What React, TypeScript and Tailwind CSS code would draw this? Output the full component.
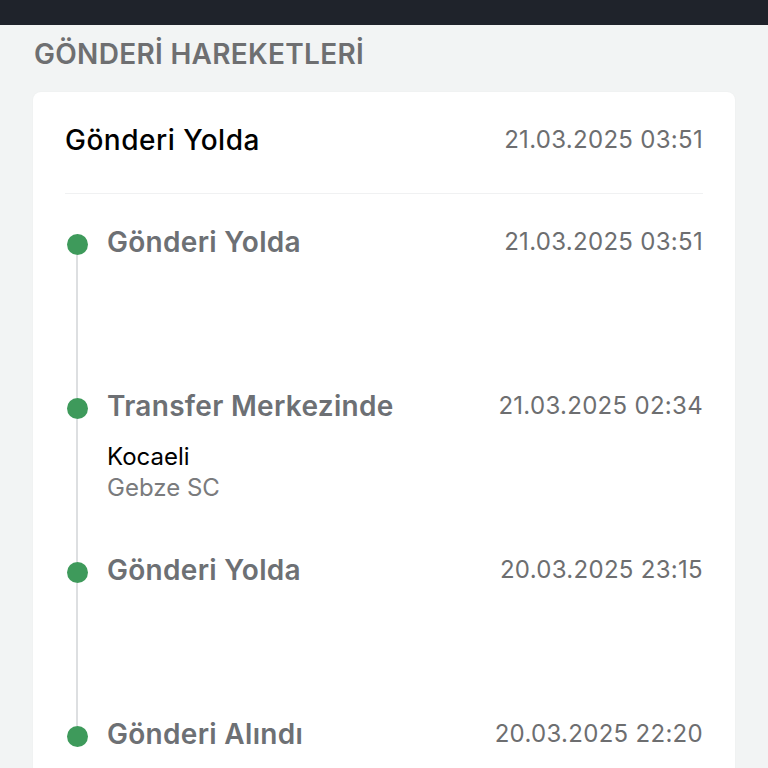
import React from 'react';

const events = [
  { id: 1, title: 'Gönderi Yolda', date: '21.03.2025 03:51' },
  { id: 2, title: 'Transfer Merkezinde', date: '21.03.2025 02:34', city: 'Kocaeli', branch: 'Gebze SC' },
  { id: 3, title: 'Gönderi Yolda', date: '20.03.2025 23:15' },
  { id: 4, title: 'Gönderi Alındı', date: '20.03.2025 22:20' },
];

const App = () => {
  return (
    <div className="min-h-screen w-full bg-[#f2f4f4] font-['Inter','Noto_Sans',sans-serif]">
      <div className="h-[25px] bg-[#1f232b]" />

      <div className="px-[33px]">
        <h2 className="pl-px pt-[13px] text-[28px] leading-[32px] font-semibold tracking-[0.3px] text-[#6e6f71]">
          GÖNDERİ HAREKETLERİ
        </h2>

        <div className="mt-[22px] rounded-lg bg-white px-8 shadow-[0_0_2px_rgba(0,0,0,0.04)]">
          <div className="flex items-center justify-between border-b border-[#f0f1f2] pt-8 pb-[37px]">
            <span className="text-[28px] leading-[32px] font-medium tracking-[0.5px] text-black">Gönderi Yolda</span>
            <span className="text-[24px] leading-[32px] tracking-[0.3px] text-[#6d6e70]">21.03.2025 03:51</span>
          </div>

          <div className="pt-8">
            {events.map((ev, i) => (
              <div key={ev.id} className="flex h-[164px]">
                <div className="flex w-6 flex-col items-center">
                  <div className={`h-[8px] w-[2px] ${i === 0 ? '' : 'bg-[#dddfe1]'}`} />
                  <div className="h-[21px] w-[21px] rounded-full bg-[#3e9a5b]" />
                  <div className={`w-[2px] flex-1 ${i === events.length - 1 ? '' : 'bg-[#dddfe1]'}`} />
                </div>
                <div className="ml-[18px] flex-1">
                  <div className="flex items-center justify-between">
                    <span className="text-[28px] leading-[32px] font-semibold tracking-[0.3px] text-[#6d7074]">{ev.title}</span>
                    <span className="text-[24px] leading-[32px] tracking-[0.3px] text-[#6d6e70]">{ev.date}</span>
                  </div>
                  {ev.city && (
                    <div className="mt-[19px] text-[24px] leading-[31px]">
                      <div className="text-black">{ev.city}</div>
                      <div className="text-[#7a7b7d]">{ev.branch}</div>
                    </div>
                  )}
                </div>
              </div>
            ))}
          </div>
        </div>
      </div>
    </div>
  );
};

export default App;
